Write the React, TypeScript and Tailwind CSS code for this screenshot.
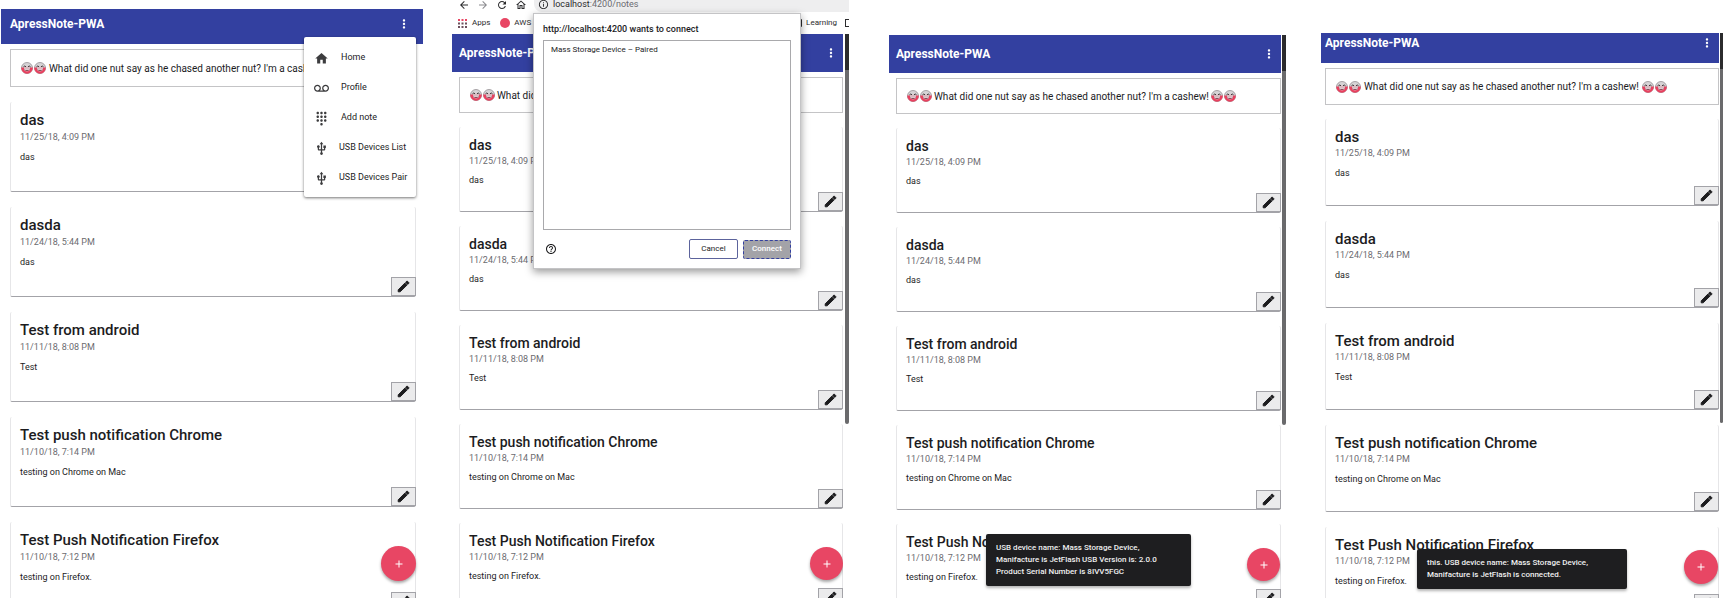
import { useId, type ReactNode } from "react";
import { MdAdd, MdArrowBack, MdArrowForward, MdDialpad, MdHelpOutline, MdHome, MdInfoOutline, MdMoreVert, MdOutlineHome, MdRefresh, MdUsb, MdVoicemail } from "react-icons/md";

type Note = { title: string; date: string; body: string };

const notes: Note[] = [
  { title: "das", date: "11/25/18, 4:09 PM", body: "das" },
  { title: "dasda", date: "11/24/18, 5:44 PM", body: "das" },
  { title: "Test from android", date: "11/11/18, 8:08 PM", body: "Test" },
  { title: "Test push notification Chrome", date: "11/10/18, 7:14 PM", body: "testing on Chrome on Mac" },
  { title: "Test Push Notification Firefox", date: "11/10/18, 7:12 PM", body: "testing on Firefox." },
];

function Face() {
  const id = useId();
  return (
    <svg viewBox="0 0 24 24" className="size-3 shrink-0" aria-hidden="true">
      <defs>
        <clipPath id={id}>
          <rect x="0" y="11" width="24" height="13" />
        </clipPath>
      </defs>
      <circle cx="12" cy="12" r="11" fill="#d6d4d6" stroke="#8f8a8e" strokeWidth="1.5" />
      <circle cx="12" cy="12" r="11.5" fill="#e8415f" clipPath={`url(#${id})`} />
      <path d="M6 9h12v6q-1 4-6 4t-6-4z" fill="#d9b9c0" />
      <path d="M5 9.5q2.500-3 5 0M14 9.500q2.500-3 5 0" fill="none" stroke="#3c3638" strokeWidth="2" />
      <path d="M7 14h10q-.5 4-5 4t-5-4z" fill="#7d3f4c" />
      <path d="M8 14h8v1.600h-8z" fill="#f3e9eb" />
    </svg>
  );
}

function Faces() {
  return (
    <span className="flex gap-px">
      <Face />
      <Face />
    </span>
  );
}

function Pencil() {
  return (
    <svg viewBox="0 0 24 24" className="size-[15px]" fill="currentColor" stroke="currentColor" strokeWidth="1.5" aria-hidden="true">
      <path d="M3.500 17.300V20.500h3.200L17.500 9.800l-3.300-3.300z" />
      <path d="M20.400 7c.4-.4.4-1 0-1.400l-2-2c-.4-.4-1-.4-1.400 0l-1.700 1.700 3.400 3.400z" />
    </svg>
  );
}

type Size = "lg" | "sm" | "md";

const cardHeight: Record<Size, string> = { lg: "h-[90px] pt-2", md: "h-[87px] pt-2", sm: "h-[85px] pt-2" };
const listGap: Record<Size, string> = { lg: "gap-[15px] mt-[15px]", md: "gap-[15px] mt-[14px]", sm: "gap-[14px] mt-[14px]" };
const titleSize: Record<Size, string> = { lg: "text-[15px] leading-[21px]", md: "text-[15px] leading-5", sm: "text-[14px] leading-5" };
const bodyGap: Record<Size, string> = { lg: "mt-2", md: "mt-2", sm: "mt-[7px]" };
const jokeHeight: Record<Size, string> = { lg: "h-[38px] gap-[3px]", md: "h-[37px] gap-[3px]", sm: "h-9 gap-[2px]" };
const fabSize: Record<Size, string> = { lg: "size-[35px]", md: "size-[34px]", sm: "size-[33px]" };

function NoteCard({ note, size }: { note: Note; size: Size }) {
  return (
    <article className={`relative shrink-0 rounded-[2px] border-x border-b border-x-[#e6e6e8] border-b-[#a3a3a8] bg-white pl-[9px] ${cardHeight[size]}`}>
      <h2 className={`font-medium text-[#1c1c1e] ${titleSize[size]}`}>{note.title}</h2>
      <p className="text-[9px] leading-3 text-[#6b6b70]">{note.date}</p>
      <p className={`text-[9px] leading-3 text-[#1c1c1e] ${bodyGap[size]}`}>{note.body}</p>
      <button type="button" aria-label={`Edit ${note.title}`} className="absolute -right-px bottom-0 flex h-[19px] w-[25px] items-center justify-center border border-[#a3a3a8] bg-[#ebebec] text-[#1c1c1e]">
        <Pencil />
      </button>
    </article>
  );
}

type PhoneProps = {
  size: Size;
  top?: ReactNode;
  bar: string;
  inset: string;
  fab: string;
  scrollbar?: string;
  menu?: ReactNode;
  overlay?: ReactNode;
  className: string;
};

function Phone({ size, top, bar, inset, fab, scrollbar, menu, overlay, className }: PhoneProps) {
  return (
    <section className={`relative flex min-w-0 flex-col ${className}`}>
      {top}
      <div className="flex min-h-0 flex-1">
        <div className="relative flex min-w-0 flex-1 flex-col overflow-hidden">
          <header className={`flex shrink-0 justify-between bg-[#3340a0] text-white ${bar}`}>
            <h1 className="text-[12px] leading-4 font-bold">ApressNote-PWA</h1>
            <button type="button" aria-label="More options" className="flex size-4 items-center justify-center">
              <MdMoreVert className="size-[14px]" />
            </button>
          </header>
          <main className={`mt-[5px] flex min-h-0 flex-1 flex-col ${inset}`}>
            <div className={`flex shrink-0 items-center overflow-hidden border border-[#c4c4c6] pl-[10px] text-[10px] whitespace-nowrap text-[#1c1c1e] ${jokeHeight[size]}`}>
              <Faces />
              <p>What did one nut say as he chased another nut? I'm a cashew!</p>
              <Faces />
            </div>
            <div className={`flex flex-col ${listGap[size]}`}>
              {notes.map((note) => (
                <NoteCard key={note.title} note={note} size={size} />
              ))}
            </div>
          </main>
          <button type="button" aria-label="Add note" className={`absolute flex items-center justify-center rounded-full bg-[#e84664] text-white shadow-[0_2px_3px_rgba(0,0,0,0.35)] ${fabSize[size]} ${fab}`}>
            <MdAdd className="size-3" />
          </button>
        </div>
        {scrollbar && (
          <div className={`shrink-0 ${scrollbar}`}>
            <div className="h-[390px] rounded-b-sm border-t-[36px] border-[#2b2b2d] bg-[#6a6a6c]" />
          </div>
        )}
      </div>
      {menu}
      {overlay}
    </section>
  );
}

const menuItems = [
  { label: "Home", Icon: MdHome, text: "pl-3" },
  { label: "Profile", Icon: MdVoicemail, text: "pl-3" },
  { label: "Add note", Icon: MdDialpad, text: "pl-3" },
  { label: "USB Devices List", Icon: MdUsb, text: "pl-[10px]" },
  { label: "USB Devices Pair", Icon: MdUsb, text: "pl-[10px]" },
];

function Menu() {
  return (
    <nav className="absolute top-[37px] right-[7px] w-28 rounded-[2px] bg-white pt-[6px] pb-1 shadow-[0_1px_3px_rgba(0,0,0,0.55)]">
      {menuItems.map(({ label, Icon, text }) => (
        <button type="button" key={label} className="flex h-[30px] w-full items-center pl-[10px] text-[9px] whitespace-nowrap text-[#1c1c1e]">
          <Icon className="size-[15px] shrink-0 text-[#3c3c3e]" />
          <span className={text}>{label}</span>
        </button>
      ))}
    </nav>
  );
}

function AppsIcon() {
  return (
    <svg viewBox="0 0 9 9" className="size-[9px]" aria-hidden="true">
      {[0, 3.5, 7].map((y, row) =>
        [0, 3.5, 7].map((x) => <rect key={`${x}-${y}`} x={x} y={y} width="2" height="2" fill={row === 0 ? "#e84664" : "#6b4f5c"} />),
      )}
    </svg>
  );
}

function BrowserBar() {
  return (
    <div className="flex h-[34px] shrink-0 flex-col overflow-hidden pl-[6px] text-[#2b2b2d]">
      <div className="flex h-3 shrink-0 items-start">
        <div className="flex h-[10px] w-[76px] shrink-0 items-center gap-[7px]">
          <MdArrowBack className="size-3" />
          <MdArrowForward className="size-3 text-[#8a8a8e]" />
          <MdRefresh className="size-3" />
          <MdOutlineHome className="size-3" />
        </div>
        <div className="flex h-3 flex-1 items-center gap-1 rounded-bl-lg bg-[#eeeeef] pb-1 pl-1 text-[9px] leading-none">
          <MdInfoOutline className="size-[11px] shrink-0" />
          <span>
            localhost<span className="text-[#6b6b70]">:4200/notes</span>
          </span>
        </div>
      </div>
      <div className="flex h-[22px] items-center text-[8px] leading-none">
        <AppsIcon />
        <span className="ml-[5px]">Apps</span>
        <span className="ml-[10px] size-[10px] rounded-full bg-[#e84664]" />
        <span className="ml-1">AWS S</span>
        <span className="ml-auto h-2 w-[7px] rounded-[1px] border-2 border-[#2b2b2d]" />
        <span className="ml-1">Learning</span>
        <span className="ml-2 h-2 w-1 border border-r-0 border-[#2b2b2d]" />
      </div>
    </div>
  );
}

function PairDialog() {
  return (
    <div role="dialog" aria-label="USB device pairing" className="absolute top-[13px] right-[48px] left-[81px] flex h-[256px] flex-col border border-[#c4c4c6] bg-white px-[9px] pt-[9px] pb-[9px] shadow-[0_3px_8px_rgba(0,0,0,0.4)]">
      <h2 className="text-[9px] leading-3 font-medium text-[#1c1c1e]">http://localhost:4200 wants to connect</h2>
      <ul className="mt-[5px] flex-1 border border-[#a9a9ac] pt-[3px] pl-[7px] text-[8px] leading-3 text-[#1c1c1e]">
        <li>Mass Storage Device – Paired</li>
      </ul>
      <div className="mt-[9px] flex items-center gap-[5px] pl-[2px]">
        <button type="button" aria-label="Help" className="mr-auto">
          <MdHelpOutline className="size-3 text-[#1c1c1e]" />
        </button>
        <button type="button" className="h-5 w-[49px] rounded-[2px] border border-[#5c639c] text-[8px] text-[#1c1c1e]">Cancel</button>
        <button type="button" className="h-[19px] w-12 rounded-[2px] border border-dashed border-[#3340a0] bg-[#a3a3a8] text-[8px] font-medium text-white">Connect</button>
      </div>
    </div>
  );
}

function Toast({ lines, className }: { lines: string[]; className: string }) {
  return (
    <div role="status" className={`absolute rounded-[2px] bg-[#1e1e20] px-[10px] py-2 text-[8px] leading-3 font-medium whitespace-nowrap text-[#f0f0f0] shadow-[0_2px_3px_rgba(0,0,0,0.3)] ${className}`}>
      {lines.map((line) => (
        <p key={line}>{line}</p>
      ))}
    </div>
  );
}

export default function App() {
  return (
    <div className="flex h-screen overflow-hidden bg-white pr-[2px] pb-px pl-px font-[Roboto,sans-serif]">
      <Phone size="lg" className="flex-[422_1_0%] pt-[9px]" bar="h-[35px] pt-[7px] pl-[9px] pr-[11px]" inset="pl-[9px] pr-[7px]" fab="right-[7px] bottom-[17px]" menu={<Menu />} />
      <Phone size="sm" className="ml-[29px] flex-[397_1_0%]" top={<BrowserBar />} bar="h-[38px] items-center pl-[7px] pr-1" inset="pl-[7px]" fab="right-0 bottom-[18px]" scrollbar="w-1 ml-[2px]" overlay={<PairDialog />} />
      <Phone size="sm" className="ml-10 flex-[397_1_0%] pt-[35px]" bar="h-[38px] items-center pl-[7px] pr-1" inset="pl-[7px]" fab="right-px bottom-[17px]" scrollbar="w-1 ml-px" overlay={<Toast className="bottom-3 left-[97px] w-[205px]" lines={["USB device name: Mass Storage Device,", "Manifacture is JetFlash USB Version is: 2.0.0", "Product Serial Number is 8IVV5FGC"]} />} />
      <Phone size="md" className="ml-[35px] flex-[402_1_0%] pt-[33px]" bar="h-[30px] pt-[2px] pl-1 pr-1" inset="pl-1" fab="right-px bottom-[14px]" scrollbar="w-[3px] ml-px" overlay={<Toast className="bottom-[9px] left-[96px] w-[210px]" lines={["this. USB device name: Mass Storage Device,", "Manifacture is JetFlash is connected."]} />} />
    </div>
  );
}
